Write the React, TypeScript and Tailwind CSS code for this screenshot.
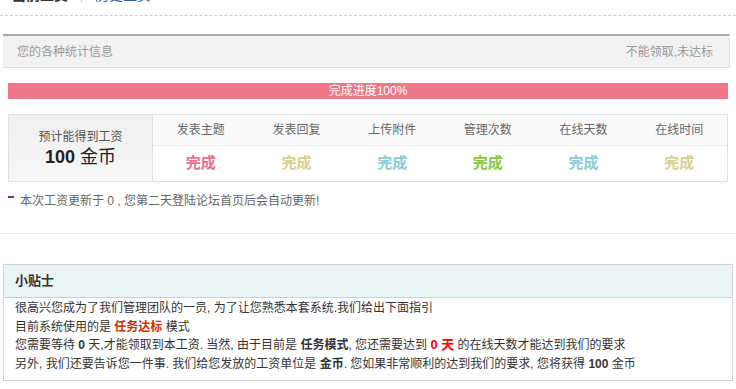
export default function App() {
  const stats = [
    { label: "发表主题", color: "text-[#ea6f8b]" },
    { label: "发表回复", color: "text-[#d7d08f]" },
    { label: "上传附件", color: "text-[#8ccbd9]" },
    { label: "管理次数", color: "text-[#7fcc3a]" },
    { label: "在线天数", color: "text-[#8ccbd9]" },
    { label: "在线时间", color: "text-[#d7d08f]" },
  ];

  return (
    <div
      className="w-[736px] h-[389px] overflow-hidden bg-white text-[12px] text-[#333]"
      style={{ fontFamily: '"Liberation Sans", "Noto Sans CJK SC", sans-serif' }}
    >
      {/* tabs, mostly scrolled out of view */}
      <div className="flex items-end h-[16px] pb-[11px] overflow-hidden border-b border-dashed border-[#ccc] pl-[12px]">
        <span className="text-[14px] leading-[18px] font-bold text-[#333]">当前工资</span>
        <span className="mx-[12px] leading-[18px] text-[#ccc]">|</span>
        <span className="text-[14px] leading-[18px] text-[#336699]">历史工资</span>
      </div>

      {/* stats header */}
      <div className="mt-[18px] ml-[3px] w-[727px] h-[34px] flex items-center justify-between bg-[#f2f2f2] border-t-2 border-[#a8a8a8] border-b border-r border-b-[#dedede] border-r-[#e6e6e6] pl-[14px] pr-[16px] text-[#999]">
        <span>您的各种统计信息</span>
        <span>不能领取,未达标</span>
      </div>

      {/* progress */}
      <div className="mt-[15px] ml-[8px] w-[720px] h-[16px] bg-[#f07788] text-white flex items-center justify-center leading-[16px]">
        完成进度100%
      </div>

      {/* stats table */}
      <div className="mt-[15px] ml-[8px] w-[720px] h-[68px] flex border border-[#e0e0e0]">
        <div className="w-[144px] flex flex-col items-center justify-center bg-gradient-to-b from-[#efefef] to-[#f8f8f8] border-r border-[#e0e0e0]">
          <div className="text-[#555] leading-[18px]">预计能得到工资</div>
          <div className="text-[18px] leading-[22px] text-[#222]">
            <span className="font-bold">100</span> 金币
          </div>
        </div>
        <div className="flex-1 grid grid-cols-6 grid-rows-[31px_1fr]">
          {stats.map((s) => (
            <div
              key={s.label}
              className="flex items-center justify-center bg-[#fafafa] border-b border-[#ececec] text-[#666]"
            >
              {s.label}
            </div>
          ))}
          {stats.map((s, i) => (
            <div
              key={i}
              className={`flex items-center justify-center text-[15px] font-bold ${s.color}`}
            >
              完成
            </div>
          ))}
        </div>
      </div>

      {/* note */}
      <div className="mt-[11px] ml-[8px] flex items-center h-[16px] text-[#666]">
        <span className="w-[6px] h-[2px] bg-[#7a2a8a] mr-[6px] -mt-[8px]"></span>
        <span>本次工资更新于 0 , 您第二天登陆论坛首页后会自动更新!</span>
      </div>

      <div className="mt-[24px] border-t border-[#ececec]"></div>

      {/* tips */}
      <div className="mt-[30px] ml-[3px] w-[730px] border border-[#d2d2d2]">
        <div className="h-[33px] flex items-center pl-[11px] bg-[#ebf4f4] border-b border-[#c5d3d8] text-[13px] font-bold text-[#333]">
          小贴士
        </div>
        <div className="pl-[11px] pt-[1px] pb-[7px] leading-[18.5px] text-[#333]">
          <div>很高兴您成为了我们管理团队的一员, 为了让您熟悉本套系统.我们给出下面指引</div>
          <div>
            目前系统使用的是 <b className="text-[#c63300]">任务达标</b> 模式
          </div>
          <div>
            您需要等待 <b>0</b> 天,才能领取到本工资. 当然, 由于目前是 <b>任务模式</b>, 您还需要达到{" "}
            <b className="text-[#ff0000] text-[13px]">0 天</b> 的在线天数才能达到我们的要求
          </div>
          <div>
            另外, 我们还要告诉您一件事. 我们给您发放的工资单位是 <b>金币</b>. 您如果非常顺利的达到我们的要求, 您将获得{" "}
            <b>100</b> 金币
          </div>
        </div>
      </div>
    </div>
  );
}
